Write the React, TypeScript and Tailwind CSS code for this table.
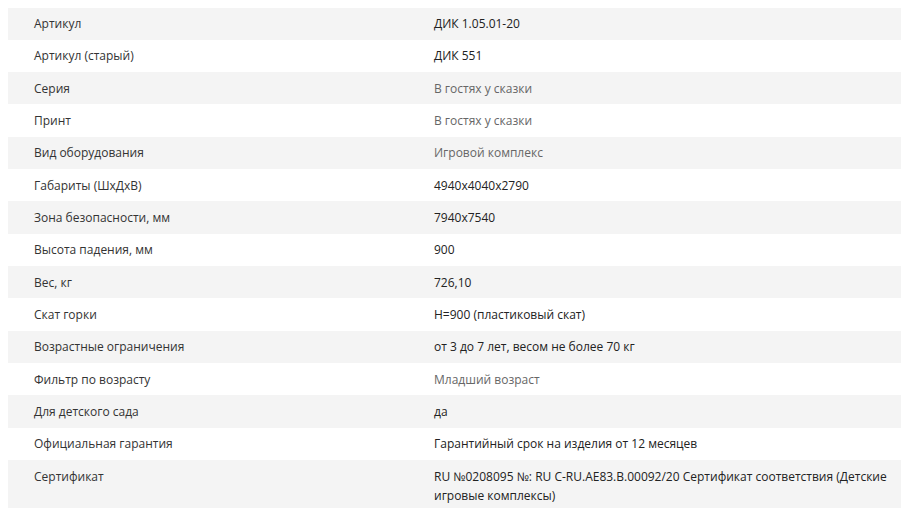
import React from "react";

type Row = { label: string; value: string; muted?: boolean };

const rows: Row[] = [
  { label: "Артикул", value: "ДИК 1.05.01-20" },
  { label: "Артикул (старый)", value: "ДИК 551" },
  { label: "Серия", value: "В гостях у сказки", muted: true },
  { label: "Принт", value: "В гостях у сказки", muted: true },
  { label: "Вид оборудования", value: "Игровой комплекс", muted: true },
  { label: "Габариты (ШхДхВ)", value: "4940x4040x2790" },
  { label: "Зона безопасности, мм", value: "7940x7540" },
  { label: "Высота падения, мм", value: "900" },
  { label: "Вес, кг", value: "726,10" },
  { label: "Скат горки", value: "H=900 (пластиковый скат)" },
  { label: "Возрастные ограничения", value: "от 3 до 7 лет, весом не более 70 кг" },
  { label: "Фильтр по возрасту", value: "Младший возраст", muted: true },
  { label: "Для детского сада", value: "да" },
  { label: "Официальная гарантия", value: "Гарантийный срок на изделия от 12 месяцев" },
  {
    label: "Сертификат",
    value:
      "RU №0208095 №: RU C-RU.AE83.B.00092/20 Сертификат соответствия (Детские игровые комплексы)",
  },
];

export default function App() {
  return (
    <div className="h-[508px] overflow-hidden bg-white pl-2 pt-[7.5px] font-['Open_Sans',sans-serif] text-[12px] leading-[19.33px] text-[#333]">
      <table className="w-[893px] border-collapse">
        <tbody>
          {rows.map((row, i) => (
            <tr key={row.label} className={i % 2 === 0 ? "bg-[#f4f4f4]" : "bg-white"}>
              <td className="w-[400px] py-[6.5px] pl-[26px] pr-4 align-top">{row.label}</td>
              <td
                className={
                  "py-[6.5px] pl-[26px] pr-[10px] align-top " +
                  (row.muted ? "text-[#666]" : "text-[#222]")
                }
              >
                {row.value}
              </td>
            </tr>
          ))}
        </tbody>
      </table>
    </div>
  );
}
